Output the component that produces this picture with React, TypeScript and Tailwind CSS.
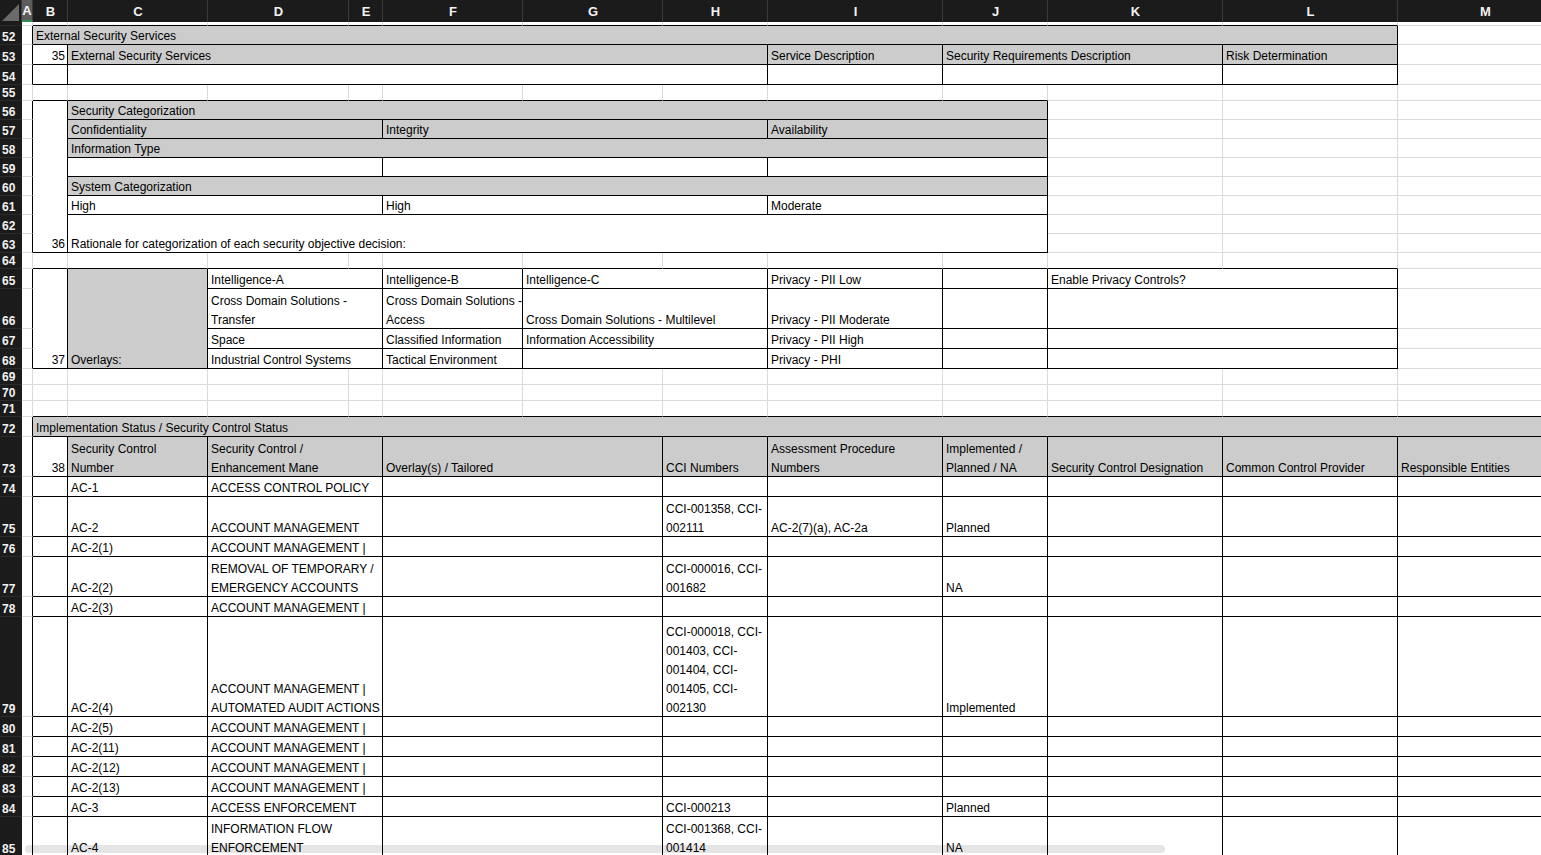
import React from "react";

type CP = { w: string; g?: boolean; r?: boolean; b?: boolean; right?: boolean; t?: string; h?: string };

function C({ w, g, r, b, right, t, h }: CP) {
  return (
    <div
      className={`${w} ${h ?? "self-stretch"} shrink-0 flex flex-col justify-end whitespace-pre pl-[3px] pr-[2px] border-r border-b ${
        r ? "border-r-black" : "border-r-[#dadada]"
      } ${b ? "border-b-black" : "border-b-[#dadada]"} ${g ? "bg-[#cccccc]" : "bg-white"} ${
        right ? "items-end" : "items-start"
      }`}
    >
      {t ? <div className="mb-[-2px]">{t}</div> : null}
    </div>
  );
}

function Row({ h, children }: { h: string; children: React.ReactNode }) {
  return <div className={`flex shrink-0 ${h}`}>{children}</div>;
}

const rowNums: { n: string; h: string }[] = [
  { n: "", h: "h-[4px]" },
  { n: "52", h: "h-[19px]" },
  { n: "53", h: "h-[20px]" },
  { n: "54", h: "h-[20px]" },
  { n: "55", h: "h-[16px]" },
  { n: "56", h: "h-[19px]" },
  { n: "57", h: "h-[19px]" },
  { n: "58", h: "h-[19px]" },
  { n: "59", h: "h-[19px]" },
  { n: "60", h: "h-[19px]" },
  { n: "61", h: "h-[19px]" },
  { n: "62", h: "h-[19px]" },
  { n: "63", h: "h-[19px]" },
  { n: "64", h: "h-[16px]" },
  { n: "65", h: "h-[20px]" },
  { n: "66", h: "h-[40px]" },
  { n: "67", h: "h-[20px]" },
  { n: "68", h: "h-[20px]" },
  { n: "69", h: "h-[16px]" },
  { n: "70", h: "h-[16px]" },
  { n: "71", h: "h-[16px]" },
  { n: "72", h: "h-[20px]" },
  { n: "73", h: "h-[40px]" },
  { n: "74", h: "h-[20px]" },
  { n: "75", h: "h-[40px]" },
  { n: "76", h: "h-[20px]" },
  { n: "77", h: "h-[40px]" },
  { n: "78", h: "h-[20px]" },
  { n: "79", h: "h-[100px]" },
  { n: "80", h: "h-[20px]" },
  { n: "81", h: "h-[20px]" },
  { n: "82", h: "h-[20px]" },
  { n: "83", h: "h-[20px]" },
  { n: "84", h: "h-[20px]" },
  { n: "85", h: "h-[40px]" },
];

const headerCols: { l: string; w: string }[] = [
  { l: "B", w: "w-[35px]" },
  { l: "C", w: "w-[140px]" },
  { l: "D", w: "w-[141px]" },
  { l: "E", w: "w-[34px]" },
  { l: "F", w: "w-[140px]" },
  { l: "G", w: "w-[140px]" },
  { l: "H", w: "w-[105px]" },
  { l: "I", w: "w-[175px]" },
  { l: "J", w: "w-[105px]" },
  { l: "K", w: "w-[175px]" },
  { l: "L", w: "w-[175px]" },
  { l: "M", w: "w-[175px]" },
];

const colsBM = [
  "w-[35px]",
  "w-[140px]",
  "w-[141px]",
  "w-[34px]",
  "w-[140px]",
  "w-[140px]",
  "w-[105px]",
  "w-[175px]",
  "w-[105px]",
  "w-[175px]",
  "w-[175px]",
  "w-[175px]",
];

function BlankRow({ h, blackUntil }: { h: string; blackUntil: number }) {
  return (
    <Row h={h}>
      <C w="w-[11px]" />
      {colsBM.map((w, i) => (
        <C key={i} w={w} b={i < blackUntil} />
      ))}
    </Row>
  );
}

const ctrl: { h: string; c: string; d: string; cci: string; ap: string; st: string }[] = [
  { h: "h-[20px]", c: "AC-1", d: "ACCESS CONTROL POLICY", cci: "", ap: "", st: "" },
  { h: "h-[40px]", c: "AC-2", d: "ACCOUNT MANAGEMENT", cci: "CCI-001358, CCI-\n002111", ap: "AC-2(7)(a), AC-2a", st: "Planned" },
  { h: "h-[20px]", c: "AC-2(1)", d: "ACCOUNT MANAGEMENT |", cci: "", ap: "", st: "" },
  { h: "h-[40px]", c: "AC-2(2)", d: "REMOVAL OF TEMPORARY /\nEMERGENCY ACCOUNTS", cci: "CCI-000016, CCI-\n001682", ap: "", st: "NA" },
  { h: "h-[20px]", c: "AC-2(3)", d: "ACCOUNT MANAGEMENT |", cci: "", ap: "", st: "" },
  {
    h: "h-[100px]",
    c: "AC-2(4)",
    d: "ACCOUNT MANAGEMENT |\nAUTOMATED AUDIT ACTIONS",
    cci: "CCI-000018, CCI-\n001403, CCI-\n001404, CCI-\n001405, CCI-\n002130",
    ap: "",
    st: "Implemented",
  },
  { h: "h-[20px]", c: "AC-2(5)", d: "ACCOUNT MANAGEMENT |", cci: "", ap: "", st: "" },
  { h: "h-[20px]", c: "AC-2(11)", d: "ACCOUNT MANAGEMENT |", cci: "", ap: "", st: "" },
  { h: "h-[20px]", c: "AC-2(12)", d: "ACCOUNT MANAGEMENT |", cci: "", ap: "", st: "" },
  { h: "h-[20px]", c: "AC-2(13)", d: "ACCOUNT MANAGEMENT |", cci: "", ap: "", st: "" },
  { h: "h-[20px]", c: "AC-3", d: "ACCESS ENFORCEMENT", cci: "CCI-000213", ap: "", st: "Planned" },
  { h: "h-[40px]", c: "AC-4", d: "INFORMATION FLOW\nENFORCEMENT", cci: "CCI-001368, CCI-\n001414", ap: "", st: "NA" },
];

const overlays: { h: string; d: string; f: string; g: string; i: string }[] = [
  { h: "h-[20px]", d: "Intelligence-A", f: "Intelligence-B", g: "Intelligence-C", i: "Privacy - PII Low" },
  {
    h: "h-[40px]",
    d: "Cross Domain Solutions -\nTransfer",
    f: "Cross Domain Solutions -\nAccess",
    g: "Cross Domain Solutions - Multilevel",
    i: "Privacy - PII Moderate",
  },
  { h: "h-[20px]", d: "Space", f: "Classified Information", g: "Information Accessibility", i: "Privacy - PII High" },
  { h: "h-[20px]", d: "Industrial Control Systems", f: "Tactical Environment", g: "", i: "Privacy - PHI" },
];

export default function App() {
  return (
    <div className="relative w-[1541px] h-[855px] overflow-hidden bg-white text-black text-[12px] leading-[19px] font-['Liberation_Sans',Arial,sans-serif]">
      {/* Column header */}
      <div className="flex h-[22px] bg-[#1b1b1b] text-[#f2f2f2] font-bold text-[13px]">
        <div className="w-[22px] shrink-0 flex items-end justify-end border-r border-[#3a3a3a]">
          <svg width="20" height="20" viewBox="0 0 20 20">
            <polygon points="18,2 18,19 1,19" fill="#6a6a6a" />
          </svg>
        </div>
        <div className="w-[11px] shrink-0 flex items-center justify-center bg-[#5c5c5c] border-r border-[#3a3a3a] border-b-2 border-b-[#2f8f55]">
          A
        </div>
        {headerCols.map((c) => (
          <div key={c.l} className={`${c.w} shrink-0 flex items-center justify-center pl-[1px] border-r border-[#3a3a3a]`}>
            {c.l}
          </div>
        ))}
      </div>

      <div className="flex">
        {/* Row numbers */}
        <div className="w-[22px] shrink-0 flex flex-col bg-[#1b1b1b] text-[#f2f2f2] font-bold text-[12px] leading-[16px]">
          {rowNums.map((r, i) => (
            <div key={i} className={`${r.h} shrink-0 flex items-end pl-[2px] border-b border-[#2c2c2c]`}>
              <span className="mb-[-1px]">{r.n}</span>
            </div>
          ))}
        </div>

        {/* Sheet body */}
        <div className="flex flex-col">
          <BlankRow h="h-[4px]" blackUntil={11} />

          {/* 52 */}
          <Row h="h-[19px]">
            <C w="w-[11px]" r />
            <C w="w-[1365px]" g r b t="External Security Services" />
            <C w="w-[175px]" />
          </Row>
          {/* 53 */}
          <Row h="h-[20px]">
            <C w="w-[11px]" r />
            <C w="w-[35px]" r b right t="35" />
            <C w="w-[700px]" g r b t="External Security Services" />
            <C w="w-[175px]" g r b t="Service Description" />
            <C w="w-[280px]" g r b t="Security Requirements Description" />
            <C w="w-[175px]" g r b t="Risk Determination" />
            <C w="w-[175px]" />
          </Row>
          {/* 54 */}
          <Row h="h-[20px]">
            <C w="w-[11px]" r />
            <C w="w-[35px]" r b />
            <C w="w-[700px]" r b />
            <C w="w-[175px]" r b />
            <C w="w-[280px]" r b />
            <C w="w-[175px]" r b />
            <C w="w-[175px]" />
          </Row>
          {/* 55 */}
          <BlankRow h="h-[16px]" blackUntil={9} />

          {/* 56-63 */}
          <div className="flex h-[152px] shrink-0">
            <div className="flex flex-col">
              <C w="w-[11px]" r h="h-[19px]" />
              <C w="w-[11px]" r h="h-[19px]" />
              <C w="w-[11px]" r h="h-[19px]" />
              <C w="w-[11px]" r h="h-[19px]" />
              <C w="w-[11px]" r h="h-[19px]" />
              <C w="w-[11px]" r h="h-[19px]" />
              <C w="w-[11px]" r h="h-[19px]" />
              <C w="w-[11px]" r h="h-[19px]" />
            </div>
            <C w="w-[35px]" r b right t="36" />
            <div className="flex flex-col w-[980px] shrink-0">
              <Row h="h-[19px]">
                <C w="w-[980px]" g r b t="Security Categorization" />
              </Row>
              <Row h="h-[19px]">
                <C w="w-[315px]" g r b t="Confidentiality" />
                <C w="w-[385px]" g r b t="Integrity" />
                <C w="w-[280px]" g r b t="Availability" />
              </Row>
              <Row h="h-[19px]">
                <C w="w-[980px]" g r b t="Information Type" />
              </Row>
              <Row h="h-[19px]">
                <C w="w-[315px]" r b />
                <C w="w-[385px]" r b />
                <C w="w-[280px]" r b />
              </Row>
              <Row h="h-[19px]">
                <C w="w-[980px]" g r b t="System Categorization" />
              </Row>
              <Row h="h-[19px]">
                <C w="w-[315px]" r b t="High" />
                <C w="w-[385px]" r b t="High" />
                <C w="w-[280px]" r b t="Moderate" />
              </Row>
              <Row h="h-[38px]">
                <C w="w-[980px]" r b t="Rationale for categorization of each security objective decision:" />
              </Row>
            </div>
            <div className="flex flex-col">
              {[0, 1, 2, 3, 4, 5, 6, 7].map((k) => (
                <Row key={k} h="h-[19px]">
                  <C w="w-[175px]" />
                  <C w="w-[175px]" />
                  <C w="w-[175px]" />
                </Row>
              ))}
            </div>
          </div>

          {/* 64 */}
          <BlankRow h="h-[16px]" blackUntil={11} />

          {/* 65-68 */}
          <div className="flex h-[100px] shrink-0">
            <div className="flex flex-col">
              {overlays.map((o, k) => (
                <C key={k} w="w-[11px]" r h={o.h} />
              ))}
            </div>
            <C w="w-[35px]" r b right t="37" />
            <C w="w-[140px]" g r b t="Overlays:" />
            <div className="flex flex-col">
              {overlays.map((o, k) => (
                <Row key={k} h={o.h}>
                  <C w="w-[175px]" r b t={o.d} />
                  <C w="w-[140px]" r b t={o.f} />
                  <C w="w-[245px]" r b t={o.g} />
                  <C w="w-[175px]" r b t={o.i} />
                  <C w="w-[105px]" r b />
                  <C w="w-[350px]" r b t={k === 0 ? "Enable Privacy Controls?" : ""} />
                </Row>
              ))}
            </div>
            <div className="flex flex-col">
              {overlays.map((o, k) => (
                <C key={k} w="w-[175px]" h={o.h} />
              ))}
            </div>
          </div>

          {/* 69-71 */}
          <BlankRow h="h-[16px]" blackUntil={0} />
          <BlankRow h="h-[16px]" blackUntil={0} />
          <BlankRow h="h-[16px]" blackUntil={12} />

          {/* 72 */}
          <Row h="h-[20px]">
            <C w="w-[11px]" r />
            <C w="w-[1540px]" g r b t="Implementation Status / Security Control Status" />
          </Row>
          {/* 73 */}
          <Row h="h-[40px]">
            <C w="w-[11px]" r />
            <C w="w-[35px]" r b right t="38" />
            <C w="w-[140px]" g r b t={"Security Control\nNumber"} />
            <C w="w-[175px]" g r b t={"Security Control /\nEnhancement Mane"} />
            <C w="w-[280px]" g r b t="Overlay(s) / Tailored" />
            <C w="w-[105px]" g r b t="CCI Numbers" />
            <C w="w-[175px]" g r b t={"Assessment Procedure\nNumbers"} />
            <C w="w-[105px]" g r b t={"Implemented /\nPlanned / NA"} />
            <C w="w-[175px]" g r b t="Security Control Designation" />
            <C w="w-[175px]" g r b t="Common Control Provider" />
            <C w="w-[175px]" g r b t="Responsible Entities" />
          </Row>
          {ctrl.map((c, k) => (
            <Row key={k} h={c.h}>
              <C w="w-[11px]" r />
              <C w="w-[35px]" r b />
              <C w="w-[140px]" r b t={c.c} />
              <C w="w-[175px]" r b t={c.d} />
              <C w="w-[280px]" r b />
              <C w="w-[105px]" r b t={c.cci} />
              <C w="w-[175px]" r b t={c.ap} />
              <C w="w-[105px]" r b t={c.st} />
              <C w="w-[175px]" r b />
              <C w="w-[175px]" r b />
              <C w="w-[175px]" r b />
            </Row>
          ))}
        </div>
      </div>

      {/* horizontal scrollbar overlay */}
      <div className="absolute left-[25px] bottom-[2px] w-[1140px] h-[8px] rounded-full bg-black/10" />
    </div>
  );
}
